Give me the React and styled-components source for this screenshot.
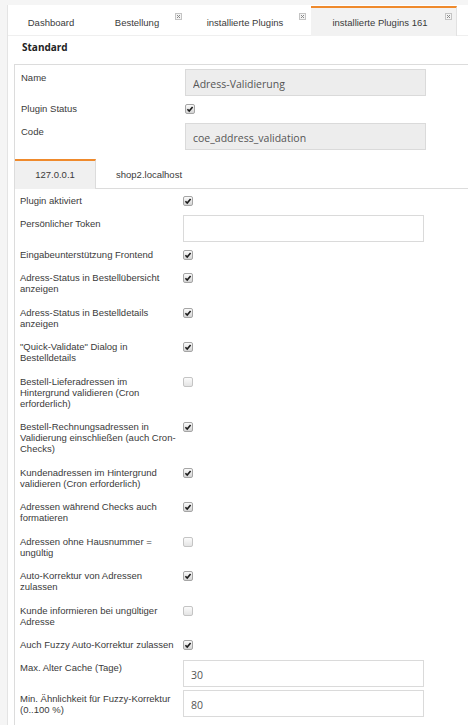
import React from 'react';
import styled, { createGlobalStyle } from 'styled-components';

const GlobalStyle = createGlobalStyle`
	html,
	body {
		margin: 0;
		padding: 0;
		background: #f5f5f5;
	}
	body {
		font-family: 'Liberation Sans', Arial, sans-serif;
		font-size: 9.5px;
		color: #3a3a3a;
	}
`;

const Shell = styled.div`
	margin: 5px 0 0 7px;
	min-height: 720px;
	background: #fff;
	border-left: 1px solid #e4e4e4;
`;

const TabBar = styled.div`
	display: flex;
	align-items: flex-end;
	height: 31px;
	box-sizing: border-box;
	border-bottom: 1px solid #efefef;
`;

const Tab = styled.div`
	position: relative;
	width: ${({ $width }) => $width}px;
	height: 30px;
	margin-bottom: -1px;
	box-sizing: border-box;
	display: flex;
	align-items: center;
	justify-content: center;
	padding-right: ${({ $closable }) => ($closable ? '7px' : '0')};
	border-top: 2px solid ${({ $active }) => ($active ? '#ef8a2c' : 'transparent')};
	border-right: 1px solid ${({ $active }) => ($active ? '#e2e2e2' : 'transparent')};
	background: ${({ $active }) => ($active ? '#f2f2f2' : 'transparent')};
	color: #3a3a3a;
	white-space: nowrap;
`;

const CloseIcon = styled.svg`
	position: absolute;
	top: 5px;
	right: 4px;
	width: 7px;
	height: 7px;
`;

const SectionTitle = styled.div`
	height: 28px;
	box-sizing: border-box;
	padding: 6px 0 0 14px;
	font-family: 'Open Sans', 'Liberation Sans', sans-serif;
	font-weight: 700;
	font-size: 10px;
	line-height: 11px;
	color: #222;
`;

const FormBody = styled.div`
	margin-left: 6px;
	padding-top: 1px;
	border-left: 1px solid #dcdcdc;
	border-top: 1px solid #dcdcdc;
	min-height: 660px;
`;

const Row = styled.div`
	display: grid;
	grid-template-columns: ${({ $labelWidth }) => $labelWidth}px auto;
	align-items: start;
	padding: ${({ $field }) => ($field ? '3px 0 0.5px' : '6px 0 6.5px')};
`;

const Label = styled.div`
	padding-left: ${({ $indent }) => $indent}px;
	padding-top: ${({ $field }) => ($field ? '2.5px' : '0')};
	line-height: 11px;
	white-space: pre-line;
`;

const TextField = styled.input`
	width: 241px;
	height: 27px;
	box-sizing: border-box;
	margin: 0;
	padding: 3px 7px 0;
	border: 1px solid #dadada;
	border-radius: 0;
	outline: none;
	background: ${({ readOnly }) => (readOnly ? '#ededed' : '#fff')};
	font-family: 'Open Sans', 'Liberation Sans', sans-serif;
	font-size: 10.5px;
	color: #555;
`;

const Box = styled.span`
	display: inline-flex;
	align-items: center;
	justify-content: center;
	width: 10px;
	height: 10px;
	margin-top: 1px;
	box-sizing: border-box;
	border: 1px solid ${({ $checked }) => ($checked ? '#a5a5a5' : '#c4c4c4')};
	border-radius: 2px;
	background: linear-gradient(#fbfbfb, ${({ $checked }) => ($checked ? '#d4d4d4' : '#e4e4e4')});
`;

const SubTabBar = styled.div`
	display: flex;
	align-items: flex-end;
	height: 30px;
	margin-top: 8px;
	box-sizing: border-box;
	border-bottom: 1px solid #dcdcdc;
`;

const SubTab = styled.div`
	height: 30px;
	margin-bottom: -1px;
	box-sizing: border-box;
	display: flex;
	align-items: center;
	justify-content: center;
	width: ${({ $active }) => ($active ? '81px' : 'auto')};
	padding: ${({ $active }) => ($active ? '0' : '0 20px')};
	border-top: 2px solid ${({ $active }) => ($active ? '#ef8a2c' : 'transparent')};
	border-right: 1px solid ${({ $active }) => ($active ? '#dcdcdc' : 'transparent')};
	background: ${({ $active }) => ($active ? '#f0f0f0' : 'transparent')};
	color: #3a3a3a;
`;

const Checkbox = ({ checked }) => (
	<Box $checked={checked}>
		{checked && (
			<svg width="8" height="8" viewBox="0 0 8 8">
				<path d="M1.4 4.3 L3.2 6.1 L6.6 1.9" fill="none" stroke="#1c1c1c" strokeWidth="1.6" />
			</svg>
		)}
	</Box>
);

const Close = () => (
	<CloseIcon viewBox="0 0 7 7">
		<rect x="0.5" y="0.5" width="6" height="6" fill="#f4f4f4" stroke="#c4c4c4" />
		<path d="M2 2 L5 5 M5 2 L2 5" stroke="#8a8a8a" strokeWidth="1" />
	</CloseIcon>
);

const tabs = [
	{ title: 'Dashboard', width: 87 },
	{ title: 'Bestellung', width: 92, closable: true },
	{ title: 'installierte Plugins', width: 124, closable: true },
	{ title: 'installierte Plugins 161', width: 146, closable: true, active: true },
];

const settings = [
	{ label: 'Plugin aktiviert', checked: true },
	{ label: 'Persönlicher Token', value: '' },
	{ label: 'Eingabeunterstützung Frontend', checked: true },
	{ label: 'Adress-Status in Bestellübersicht\nanzeigen', checked: true },
	{ label: 'Adress-Status in Bestelldetails\nanzeigen', checked: true },
	{ label: '"Quick-Validate" Dialog in\nBestelldetails', checked: true },
	{ label: 'Bestell-Lieferadressen im\nHintergrund validieren (Cron\nerforderlich)', checked: false },
	{ label: 'Bestell-Rechnungsadressen in\nValidierung einschließen (auch Cron-\nChecks)', checked: true },
	{ label: 'Kundenadressen im Hintergrund\nvalidieren (Cron erforderlich)', checked: true },
	{ label: 'Adressen während Checks auch\nformatieren', checked: true },
	{ label: 'Adressen ohne Hausnummer =\nungültig', checked: false },
	{ label: 'Auto-Korrektur von Adressen\nzulassen', checked: true },
	{ label: 'Kunde informieren bei ungültiger\nAdresse', checked: false },
	{ label: 'Auch Fuzzy Auto-Korrektur zulassen', checked: true },
	{ label: 'Max. Alter Cache (Tage)', value: '30' },
	{ label: 'Min. Ähnlichkeit für Fuzzy-Korrektur\n(0..100 %)', value: '80' },
];

const SettingRow = ({ label, checked, value, readOnly, labelWidth, indent }) => {
	const isField = value !== undefined;
	return (
		<Row $field={isField} $labelWidth={labelWidth}>
			<Label $field={isField} $indent={indent}>
				{label}
			</Label>
			{isField ? (
				<TextField defaultValue={value} readOnly={readOnly} />
			) : (
				<Checkbox checked={checked} />
			)}
		</Row>
	);
};

const App = () => {
	return (
		<>
			<GlobalStyle />
			<Shell>
				<TabBar>
					{tabs.map((tab) => (
						<Tab
							key={tab.title}
							$width={tab.width}
							$active={tab.active}
							$closable={tab.closable}
						>
							{tab.title}
							{tab.closable && <Close />}
						</Tab>
					))}
				</TabBar>
				<SectionTitle>Standard</SectionTitle>
				<FormBody>
					<SettingRow label="Name" value="Adress-Validierung" readOnly labelWidth={170} indent={6} />
					<SettingRow label="Plugin Status" checked labelWidth={170} indent={6} />
					<SettingRow label="Code" value="coe_address_validation" readOnly labelWidth={170} indent={6} />
					<SubTabBar>
						<SubTab $active>127.0.0.1</SubTab>
						<SubTab>shop2.localhost</SubTab>
					</SubTabBar>
					{settings.map((item) => (
						<SettingRow key={item.label} {...item} labelWidth={168} indent={5} />
					))}
				</FormBody>
			</Shell>
		</>
	);
};

export default App;
